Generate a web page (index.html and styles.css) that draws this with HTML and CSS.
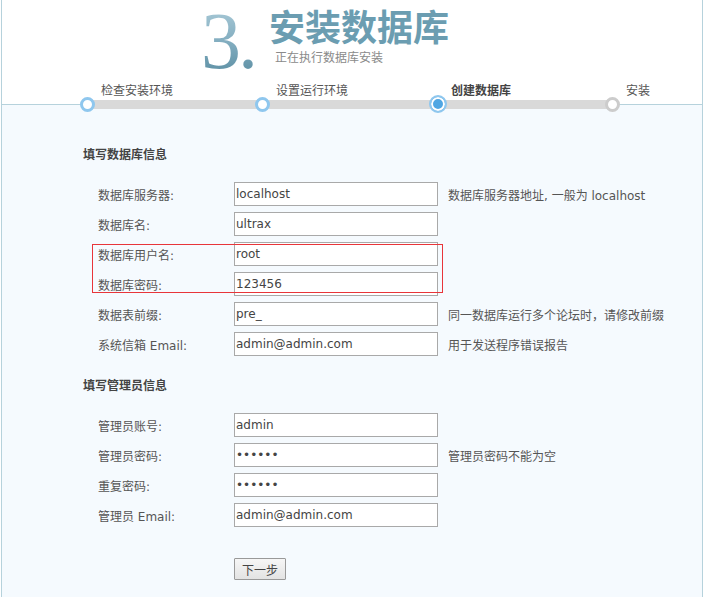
FILE: index.html
```html
<!DOCTYPE html>
<html lang="zh-CN">
<head>
<meta charset="utf-8">
<title>安装数据库</title>
<link rel="stylesheet" href="styles.css">
</head>
<body>
<div class="page">
  <div class="header">
    <div class="title">
      <span class="num">3.</span>
      <div class="title-text">
        <h1>安装数据库</h1>
        <p class="sub">正在执行数据库安装</p>
      </div>
    </div>
    <div class="steps">
      <div class="step done">
        <span class="lbl">检查安装环境</span>
        <div class="dotrow"><span class="dot"></span><span class="seg"></span></div>
      </div>
      <div class="step done">
        <span class="lbl">设置运行环境</span>
        <div class="dotrow"><span class="dot"></span><span class="seg"></span></div>
      </div>
      <div class="step current">
        <span class="lbl">创建数据库</span>
        <div class="dotrow"><span class="dot"></span><span class="seg"></span></div>
      </div>
      <div class="step todo">
        <span class="lbl">安装</span>
        <div class="dotrow"><span class="dot"></span></div>
      </div>
    </div>
  </div>
  <div class="content">
    <h2>填写数据库信息</h2>
    <div class="row"><label>数据库服务器:</label><input type="text" value="localhost"><span class="hint">数据库服务器地址, 一般为 localhost</span></div>
    <div class="row"><label>数据库名:</label><input type="text" value="ultrax"></div>
    <div class="mark">
      <div class="row"><label>数据库用户名:</label><input type="text" value="root"></div>
      <div class="row"><label>数据库密码:</label><input type="text" value="123456"></div>
    </div>
    <div class="row"><label>数据表前缀:</label><input type="text" value="pre_"><span class="hint">同一数据库运行多个论坛时，请修改前缀</span></div>
    <div class="row"><label>系统信箱 Email:</label><input type="text" value="admin@admin.com"><span class="hint">用于发送程序错误报告</span></div>

    <h2 class="second">填写管理员信息</h2>
    <div class="row"><label>管理员账号:</label><input type="text" value="admin"></div>
    <div class="row"><label>管理员密码:</label><input type="password" value="123456"><span class="hint">管理员密码不能为空</span></div>
    <div class="row"><label>重复密码:</label><input type="password" value="123456"></div>
    <div class="row"><label>管理员 Email:</label><input type="text" value="admin@admin.com"></div>

    <div class="actions"><button type="button">下一步</button></div>
  </div>
</div>
</body>
</html>
```
FILE: styles.css
```css
html, body {
  margin: 0;
  padding: 0;
  background: #ffffff;
}
body {
  font-family: "DejaVu Sans", "Noto Sans CJK SC", sans-serif;
  font-size: 12px;
  color: #555555;
}
.page {
  margin-left: 1px;
  width: 700px;
  height: 597px;
  border-left: 1px solid #b6d2dc;
  border-right: 1px solid #b6d2dc;
  display: flex;
  flex-direction: column;
  overflow: hidden;
}
.header {
  background: #ffffff;
  border-bottom: 1px solid #b6d2dc;
  padding-top: 0;
}
.title {
  display: flex;
  align-items: flex-start;
  padding-left: 199px;
  height: 83px;
}
.num {
  font-family: "Liberation Serif", serif;
  font-size: 80px;
  line-height: 92px;
  margin-top: -5px;
  letter-spacing: -3px;
  background: linear-gradient(180deg, #b6d3df 0%, #7eaabd 55%, #4f8499 100%);
  -webkit-background-clip: text;
  background-clip: text;
  color: transparent;
}
.title-text {
  margin-left: 14px;
  padding-top: 6px;
}
h1 {
  margin: 0;
  font-family: "Noto Sans CJK SC", sans-serif;
  font-size: 36px;
  line-height: 38px;
  font-weight: bold;
  color: #6b9db1;
}
.sub {
  margin: 6px 0 0 6px;
  font-family: "Noto Sans CJK SC", sans-serif;
  font-size: 12px;
  line-height: 14px;
  color: #8a8a8a;
}
.steps {
  position: relative;
  display: grid;
  grid-template-columns: 175px 175px 175px auto;
  margin: 0 0 -9px 78px;
}
.lbl {
  display: block;
  padding-left: 21px;
  line-height: 14px;
  margin-bottom: -2px;
  font-family: "Noto Sans CJK SC", sans-serif;
  font-size: 12px;
  color: #555555;
}
.current .lbl {
  font-weight: bold;
  color: #444444;
}
.dotrow {
  display: flex;
  align-items: center;
  height: 18px;
}
.dot {
  position: relative;
  box-sizing: border-box;
  width: 15px;
  height: 15px;
  border-radius: 50%;
  border: 3px solid #8fc7ee;
  background: #ffffff;
  flex: none;
}
.current .dot {
  width: 18px;
  height: 18px;
  margin-left: -1px;
  border: 2px solid #8fc7ee;
  background: #4fa6e3;
  box-shadow: inset 0 0 0 2px #ffffff;
}
.todo .dot {
  border-color: #cccccc;
}
.seg {
  flex: 1;
  height: 9px;
  margin: 0 -5px;
  background: #d9d9d9;
}
.content {
  flex: 1;
  background: #f5fafe;
  padding: 41px 0 0 81px;
}
h2 {
  margin: 0 0 20px 0;
  font-family: "Noto Sans CJK SC", sans-serif;
  font-size: 12px;
  line-height: 16px;
  font-weight: bold;
  color: #444444;
}
h2.second {
  margin-top: 21px;
}
.row {
  display: flex;
  align-items: center;
  height: 24px;
  margin-bottom: 6px;
  padding-left: 15px;
}
.row label {
  width: 136px;
  flex: none;
  color: #555555;
}
.row input {
  box-sizing: border-box;
  width: 204px;
  height: 24px;
  margin: 0;
  padding: 0 1px;
  border: 1px solid #a9a9a9;
  background: #ffffff;
  font-family: "DejaVu Sans", sans-serif;
  font-size: 12px;
  color: #444444;
  outline: none;
}
.hint {
  margin-left: 10px;
  color: #555555;
  white-space: nowrap;
}
.mark {
  position: relative;
}
.mark::after {
  content: "";
  position: absolute;
  left: 9px;
  top: 2px;
  width: 351px;
  height: 49px;
  box-sizing: border-box;
  border: 1px solid #e8353a;
  pointer-events: none;
}
.actions {
  margin-top: 31px;
  padding-left: 151px;
}
button {
  box-sizing: border-box;
  width: 52px;
  height: 22px;
  padding: 0;
  border: 1px solid #999999;
  border-radius: 1px;
  background: linear-gradient(180deg, #f6f6f6 0%, #e3e3e3 100%);
  font-family: "Noto Sans CJK SC", sans-serif;
  font-size: 12px;
  color: #444444;
}
```
